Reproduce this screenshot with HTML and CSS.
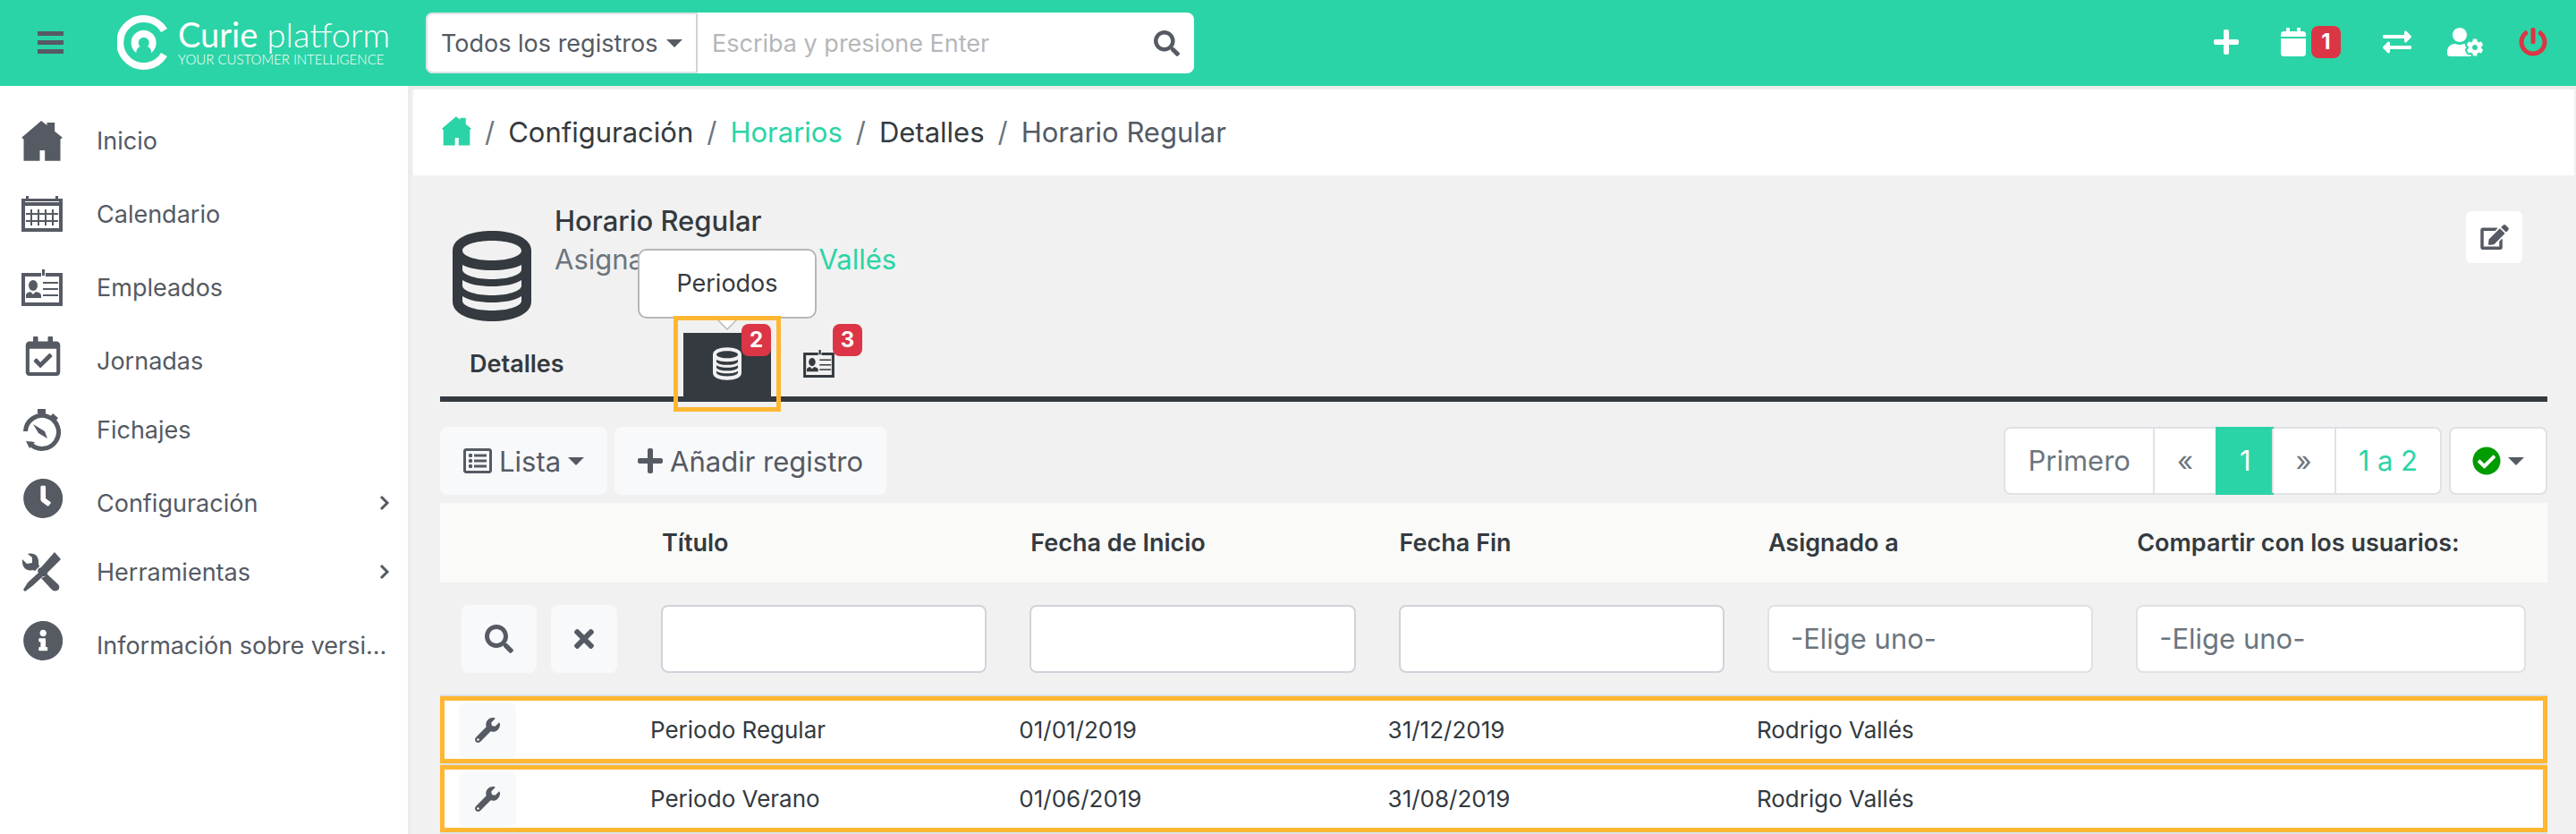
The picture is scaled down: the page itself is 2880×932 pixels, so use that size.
FILE: index.html
```html
<!DOCTYPE html>
<html lang="es">
<head>
	<title>Curie platform - Horario Regular</title>
	<meta charset="utf-8">
	<meta name="viewport" content="width=device-width, initial-scale=1">
	<link rel="stylesheet" href="styles.css">
</head>
<body>
	<!-- shared icons -->
	<svg class="sprite" aria-hidden="true">
		<symbol id="i-home" viewBox="73 411 137 135"><path d="M73 467L139 411L158 426V417H184V446L210 467L203 473V545H151V510H134V545H80V473Z"/></symbol>
		<symbol id="i-card" viewBox="0 0 46 41"><path fill-rule="evenodd" d="M0 4H22V8H4V37H42V8H27V4H46V41H0ZM23 0H26V7H23Z"/><path d="M24 14H41V16H24ZM24 21H41V23H24ZM24 28H41V30H24Z"/><ellipse cx="13" cy="18" rx="5" ry="6"/><path d="M5 32V29Q5 26 10 25L13 28L16 25Q22 26 22 29V32Z"/></symbol>
		<symbol id="i-db" viewBox="0 0 88 101"><path fill-rule="evenodd" d="M0 22C0 8 20 0 44 0S88 8 88 22V79C88 93 68 101 44 101S0 93 0 79ZM11 22C11 28 25 33 44 33S77 28 77 22S63 11 44 11S11 16 11 22ZM11 38V44C13 50 27 54 44 54S75 50 77 44V38C69 42 57 44 44 44S19 42 11 38ZM11 55V62C13 68 27 72 44 72S75 68 77 62V55C69 60 57 62 44 62S19 60 11 55ZM11 73V79C13 85 27 89 44 89S75 85 77 79V73C69 78 57 80 44 80S19 78 11 73Z"/></symbol>
		<symbol id="i-plus" viewBox="0 32 448 448"><path d="M416 208H272V64c0-17.67-14.33-32-32-32h-32c-17.67 0-32 14.33-32 32v144H32c-17.67 0-32 14.33-32 32v32c0 17.67 14.33 32 32 32h144v144c0 17.67 14.33 32 32 32h32c17.67 0 32-14.33 32-32V304h144c17.67 0 32-14.33 32-32v-32c0-17.67-14.33-32-32-32z"/></symbol>
		<symbol id="i-search" viewBox="0 0 512 512"><path d="M505 442.700L405.300 343c-4.500-4.500-10.600-7-17-7H372c27.600-35.300 44-79.700 44-128C416 93.100 322.900 0 208 0S0 93.100 0 208s93.100 208 208 208c48.300 0 92.700-16.400 128-44v16.300c0 6.400 2.500 12.500 7 17l99.700 99.700c9.400 9.400 24.600 9.400 33.900 0l28.300-28.300c9.400-9.400 9.400-24.600.1-34zM208 336c-70.700 0-128-57.200-128-128 0-70.700 57.200-128 128-128 70.700 0 128 57.200 128 128 0 70.700-57.200 128-128 128z"/></symbol>
		<symbol id="i-wrench" viewBox="0 0 512 512"><path d="M507.730 109.100c-2.240-9.030-13.540-12.090-20.120-5.510l-74.360 74.360-67.880-11.310-11.310-67.880 74.360-74.360c6.620-6.620 3.430-17.900-5.660-20.160-47.380-11.740-99.550.91-136.580 37.930-39.640 39.640-50.550 97.100-34.050 147.200L18.740 402.760c-24.990 24.990-24.990 65.510 0 90.500 24.990 24.990 65.510 24.990 90.500 0l213.210-213.210c50.120 16.710 107.470 5.680 147.370-34.220 37.070-37.070 49.700-89.320 37.910-136.730zM64 472c-13.250 0-24-10.750-24-24 0-13.260 10.750-24 24-24s24 10.740 24 24c0 13.250-10.750 24-24 24z"/></symbol>
	</svg>

	<header class="topbar">
		<button class="menu-toggle" type="button" aria-label="Menu"><svg width="29" height="26" viewBox="0 0 29 26"><path d="M0 0h29v5H0zM0 10h29v5H0zM0 20h29v5H0z"/></svg></button>
		<a class="logo" href="#">
			<svg width="58" height="62" viewBox="131 18 58 62"><path fill="none" stroke="#fff" stroke-width="8" d="M183.500 35A26.500 26.500 0 1 0 183.500 62"/><path d="M152.300 60A14 14 0 1 1 169 60C169 56 168 54 165 53A6 6 0 1 0 156.500 53C154 54 152.500 56 152.300 60Z"/></svg>
			<span class="logo-text">
				<span class="logo-name"><b>Curie</b> platform</span>
				<span class="logo-tag">YOUR CUSTOMER INTELLIGENCE</span>
			</span>
		</a>
		<form class="search">
			<span class="search-scope">
				<select aria-label="Módulo"><option>Todos los registros</option></select>
				<i class="caret"></i>
			</span>
			<input class="search-input" type="text" placeholder="Escriba y presione Enter" aria-label="Buscar">
			<button class="search-button" type="button" aria-label="Buscar"><svg width="29" height="29"><use href="#i-search"/></svg></button>
		</form>
		<nav class="actions">
			<a href="#" aria-label="Crear"><svg width="28" height="28"><use href="#i-plus"/></svg></a>
			<a href="#" aria-label="Agenda" class="agenda"><svg width="28" height="32" viewBox="0 0 448 512"><path d="M12 192h424c6.600 0 12 5.400 12 12v260c0 26.500-21.500 48-48 48H48c-26.500 0-48-21.500-48-48V204c0-6.600 5.400-12 12-12zm436-44v-36c0-26.500-21.500-48-48-48h-48V12c0-6.600-5.400-12-12-12h-40c-6.600 0-12 5.400-12 12v52H160V12c0-6.600-5.400-12-12-12h-40c-6.600 0-12 5.400-12 12v52H48C21.500 64 0 85.500 0 112v36c0 6.600 5.400 12 12 12h424c6.600 0 12-5.400 12-12z"/></svg><span class="badge">1</span></a>
			<a href="#" aria-label="Cambiar"><svg width="32" height="32" viewBox="0 0 512 512"><path d="M0 168v-16c0-13.255 10.745-24 24-24h360V80c0-21.367 25.899-32.042 40.971-16.971l80 80c9.372 9.373 9.372 24.569 0 33.941l-80 80C409.956 271.982 384 261.456 384 240v-48H24c-13.255 0-24-10.745-24-24zm488 152H128v-48c0-21.314-25.862-32.080-40.971-16.971l-80 80c-9.372 9.373-9.372 24.569 0 33.941l80 80C102.057 463.997 128 453.437 128 432v-48h360c13.255 0 24-10.745 24-24v-16c0-13.255-10.745-24-24-24z"/></svg></a>
			<a href="#" aria-label="Usuario"><svg width="40" height="32" viewBox="0 0 640 512"><path d="M610.500 373.300c2.600-14.100 2.600-28.500 0-42.600l25.800-14.900c3-1.700 4.300-5.200 3.300-8.500-6.700-21.600-18.200-41.200-33.200-57.400-2.300-2.500-6-3.100-9-1.400l-25.800 14.900c-10.900-9.300-23.400-16.500-36.900-21.300v-29.800c0-3.400-2.400-6.400-5.700-7.100-22.300-5-45-4.800-66.200 0-3.300.7-5.700 3.700-5.700 7.100v29.800c-13.500 4.800-26 12-36.900 21.300l-25.800-14.900c-2.900-1.700-6.700-1.100-9 1.400-15 16.200-26.500 35.800-33.200 57.400-1 3.300.4 6.800 3.300 8.500l25.800 14.900c-2.600 14.100-2.600 28.500 0 42.600l-25.800 14.900c-3 1.700-4.300 5.200-3.300 8.500 6.700 21.600 18.200 41.100 33.200 57.400 2.300 2.500 6 3.100 9 1.400l25.800-14.900c10.900 9.300 23.400 16.500 36.900 21.300v29.800c0 3.400 2.400 6.400 5.700 7.100 22.300 5 45 4.800 66.200 0 3.300-.7 5.700-3.700 5.700-7.100v-29.800c13.500-4.800 26-12 36.900-21.300l25.800 14.900c2.900 1.700 6.700 1.100 9-1.400 15-16.200 26.500-35.800 33.200-57.400 1-3.300-.4-6.800-3.300-8.500l-25.800-14.900zM496 400.500c-26.800 0-48.500-21.800-48.500-48.500s21.800-48.500 48.500-48.500 48.500 21.800 48.500 48.500-21.700 48.500-48.500 48.500zM224 256c70.700 0 128-57.300 128-128S294.700 0 224 0 96 57.300 96 128s57.300 128 128 128zm201.200 226.500c-2.300-1.200-4.600-2.600-6.800-3.900l-7.900 4.600c-6 3.400-12.800 5.300-19.600 5.300-10.900 0-21.400-4.600-28.900-12.600-18.300-19.800-32.300-43.900-40.200-69.600-5.500-17.700 1.900-36.400 17.900-45.700l7.900-4.600c-.1-2.600-.1-5.200 0-7.800l-7.900-4.600c-16-9.200-23.400-28-17.900-45.700.9-2.900 2.200-5.800 3.200-8.700-3.800-.3-7.500-1.200-11.400-1.200h-16.700c-22.200 10.200-46.900 16-72.900 16s-50.600-5.800-72.900-16h-16.700C60.200 288 0 348.200 0 422.400V464c0 26.500 21.500 48 48 48h352c10.100 0 19.500-3.200 27.200-8.500-1.200-3.800-2-7.700-2-11.800v-9.200z"/></svg></a>
			<a href="#" aria-label="Salir" class="logout"><svg width="32" height="32" viewBox="0 0 512 512"><path d="M400 54.100c63 45 104 118.600 104 201.900 0 136.800-110.800 247.700-247.500 248C120 504.300 8.200 393 8 256.400 7.900 173.100 48.900 99.300 111.800 54.200c11.700-8.300 28-4.800 35 7.700L162.600 90c5.900 10.500 3.100 23.800-6.600 31-41.500 30.800-68 79.600-68 134.900-.1 92.300 74.500 168.100 168 168.100 91.600 0 168.600-74.200 168-169.100-.3-51.800-24.700-101.800-68.100-134-9.700-7.200-12.400-20.500-6.500-30.900l15.800-28.100c7-12.400 23.200-16.100 34.800-7.800zM296 264V24c0-13.300-10.700-24-24-24h-32c-13.300 0-24 10.700-24 24v240c0 13.300 10.700 24 24 24h32c13.300 0 24-10.700 24-24z"/></svg></a>
		</nav>
	</header>

	<div class="layout">
		<nav class="sidebar">
			<ul>
				<li><a href="#"><svg width="46" height="45"><use href="#i-home"/></svg><span>Inicio</span></a></li>
				<li><a href="#"><svg width="46" height="40" viewBox="0 0 46 40"><path fill-rule="evenodd" d="M0 3H5V0H8V3H38V0H41V3H46V40H0ZM4 6V7H42V6ZM4 11V36H42V11Z"/><path d="M5 19H41V21H5ZM5 27H41V29H5ZM10 15H12V33H10ZM18 15H20V33H18ZM26 15H28V33H26ZM34 15H36V33H34Z"/></svg><span>Calendario</span></a></li>
				<li><a href="#"><svg width="46" height="41"><use href="#i-card"/></svg><span>Empleados</span></a></li>
				<li class="raised"><a href="#"><svg width="46" height="44" viewBox="-12 0 448 512"><path d="M400 64h-48V12c0-6.627-5.373-12-12-12h-40c-6.627 0-12 5.373-12 12v52H160V12c0-6.627-5.373-12-12-12h-40c-6.627 0-12 5.373-12 12v52H48C21.490 64 0 85.490 0 112v352c0 26.510 21.490 48 48 48h352c26.510 0 48-21.490 48-48V112c0-26.510-21.490-48-48-48zm-6 400H54a6 6 0 0 1-6-6V160h352v298a6 6 0 0 1-6 6zm-52.849-200.650L198.842 404.519c-4.705 4.667-12.303 4.637-16.971-.068l-75.091-75.699c-4.667-4.705-4.637-12.303.068-16.971l22.719-22.536c4.705-4.667 12.303-4.637 16.970.069l44.104 44.461 111.072-110.181c4.705-4.667 12.303-4.637 16.971.068l22.536 22.718c4.667 4.705 4.636 12.303-.069 16.970z"/></svg><span>Jornadas</span></a></li>
				<li class="compact"><a href="#"><svg width="46" height="47" viewBox="0 0 46 47"><g fill="none" stroke="#555a63" stroke-width="5"><path d="M4.500 25A18.500 18.500 0 1 1 9 38"/></g><path d="M18 0H27V5H18ZM35 5L41 10L38 14L32 9ZM13 17L26 25L29 33L19 27ZM5 36L15 37L9 44Z"/></svg><span>Fichajes</span></a></li>
				<li class="raised"><a href="#"><svg width="46" height="44" viewBox="-6 8 496 496"><path d="M256,8C119,8,8,119,8,256S119,504,256,504,504,393,504,256,393,8,256,8Zm92.490,313h0l-20,25a16,16,0,0,1-22.490,2.500h0l-67-49.720a40,40,0,0,1-15-31.230V112a16,16,0,0,1,16-16h32a16,16,0,0,1,16,16V256l58,42.500A16,16,0,0,1,348.490,321Z"/></svg><span>Configuración</span><svg class="chevron" width="12" height="18" viewBox="0 0 12 18"><path d="M2 2L9 9L2 16"/></svg></a></li>
				<li class="compact"><a href="#"><svg width="46" height="44" viewBox="0 0 46 44"><path d="M7 2C15 0 20 5 19 13L20 16L15 21L13 20C6 22 0 17 1 8L6 13L12 12L12 6ZM28 24L41 36C45 41 39 46 34 42L22 29L27 27Z"/><path d="M37 0L44 8L29 23C29 26 27 28 24 27L12 38L4 44L2 42L7 34L19 23C17 20 19 18 22 17Z"/></svg><span>Herramientas</span><svg class="chevron" width="12" height="18" viewBox="0 0 12 18"><path d="M2 2L9 9L2 16"/></svg></a></li>
				<li class="raised"><a href="#"><svg width="46" height="44" viewBox="-6 8 496 496"><path d="M256 8C119.043 8 8 119.083 8 256c0 136.997 111.043 248 248 248s248-111.003 248-248C504 119.083 392.957 8 256 8zm0 110c23.196 0 42 18.804 42 42s-18.804 42-42 42-42-18.804-42-42 18.804-42 42-42zm56 254c0 6.627-5.373 12-12 12h-88c-6.627 0-12-5.373-12-12v-24c0-6.627 5.373-12 12-12h12v-64h-12c-6.627 0-12-5.373-12-12v-24c0-6.627 5.373-12 12-12h64c6.627 0 12 5.373 12 12v100h12c6.627 0 12 5.373 12 12v24z"/></svg><span>Información sobre versi...</span></a></li>
			</ul>
		</nav>

		<main class="content">
			<nav class="breadcrumb">
				<a href="#" aria-label="Inicio" class="green"><svg width="33" height="33"><use href="#i-home"/></svg></a><i>/</i>
				<a href="#">Configuración</a><i>/</i>
				<a href="#" class="green">Horarios</a><i>/</i>
				<a href="#">Detalles</a><i>/</i>
				<span>Horario Regular</span>
			</nav>

			<section class="record">
				<div class="record-head">
					<svg class="record-icon" width="88" height="101"><use href="#i-db"/></svg>
					<div class="record-title">
						<h1>Horario Regular</h1>
						<p>Asignado a <a href="#">Rodrigo Vallés</a></p>
					</div>
					<button class="edit" type="button" aria-label="Editar"><svg width="32" height="28" viewBox="0 0 576 512"><path d="M402.600 83.200l90.200 90.200c3.800 3.800 3.800 10 0 13.800L274.400 405.600l-92.800 10.300c-12.400 1.400-22.900-9.100-21.500-21.500l10.300-92.800L388.800 83.200c3.800-3.800 10-3.800 13.800 0zm162-22.900l-48.800-48.800c-15.200-15.200-39.900-15.200-55.200 0l-35.400 35.400c-3.800 3.800-3.800 10 0 13.800l90.200 90.200c3.800 3.800 10 3.800 13.800 0l35.400-35.400c15.200-15.300 15.200-40 0-55.200zM384 346.200V448H64V128h229.800c3.200 0 6.200-1.300 8.500-3.500l40-40c7.600-7.600 2.200-20.500-8.500-20.500H48C21.500 64 0 85.500 0 112v352c0 26.500 21.500 48 48 48h352c26.500 0 48-21.500 48-48V306.200c0-10.700-12.900-16-20.500-8.500l-40 40c-2.200 2.300-3.500 5.300-3.500 8.500z"/></svg></button>
				</div>

				<div class="tabs">
					<a class="tab tab-main" href="#">Detalles</a>
					<a class="tab active" href="#" aria-label="Periodos">
						<svg width="32" height="37"><use href="#i-db"/></svg>
						<span class="tooltip">Periodos</span>
						<span class="highlight"></span>
						<span class="badge">2</span>
					</a>
					<a class="tab" href="#" aria-label="Empleados">
						<svg width="35" height="31"><use href="#i-card"/></svg>
						<span class="badge">3</span>
					</a>
				</div>

				<div class="toolbar">
					<button class="btn" type="button"><svg width="32" height="28" viewBox="0 32 512 448"><path d="M464 32H48C21.490 32 0 53.490 0 80v352c0 26.510 21.490 48 48 48h416c26.510 0 48-21.490 48-48V80c0-26.510-21.490-48-48-48zm-6 400H54a6 6 0 0 1-6-6V86a6 6 0 0 1 6-6h404a6 6 0 0 1 6 6v340a6 6 0 0 1-6 6z"/><path d="M192 136h224v48H192zM192 232h224v48H192zM192 328h224v48H192z"/><circle cx="128" cy="160" r="36"/><circle cx="128" cy="256" r="36"/><circle cx="128" cy="352" r="36"/></svg>Lista<i class="caret"></i></button>
					<button class="btn" type="button"><svg width="28" height="28"><use href="#i-plus"/></svg>Añadir registro</button>
					<div class="pagination">
						<a href="#">Primero</a>
						<a href="#">«</a>
						<a href="#" class="current">1</a>
						<a href="#">»</a>
						<a href="#" class="green">1 a 2</a>
					</div>
					<button class="btn status" type="button" aria-label="Estado"><svg width="32" height="32" viewBox="0 0 512 512"><path d="M504 256c0 136.967-111.033 248-248 248S8 392.967 8 256 119.033 8 256 8s248 111.033 248 248zM227.314 387.314l184-184c6.248-6.248 6.248-16.379 0-22.627l-22.627-22.627c-6.248-6.249-16.379-6.249-22.628 0L216 308.118l-70.059-70.059c-6.248-6.248-16.379-6.248-22.628 0l-22.627 22.627c-6.248 6.248-6.248 16.379 0 22.627l104 104c6.249 6.249 16.379 6.249 22.628.001z"/></svg><i class="caret"></i></button>
				</div>

				<table class="records">
					<colgroup><col class="col-tools"><col class="col-data"><col class="col-data"><col class="col-data"><col class="col-data"><col></colgroup>
					<thead>
						<tr>
							<th></th>
							<th>Título</th>
							<th>Fecha de Inicio</th>
							<th>Fecha Fin</th>
							<th>Asignado a</th>
							<th>Compartir con los usuarios:</th>
						</tr>
						<tr class="filters">
							<td><div class="filter-buttons">
								<button class="btn" type="button" aria-label="Buscar"><svg width="32" height="32"><use href="#i-search"/></svg></button>
								<button class="btn" type="button" aria-label="Limpiar"><svg width="22" height="32" viewBox="0 0 352 512"><path d="M242.720 256l100.070-100.070c12.280-12.280 12.280-32.190 0-44.480l-22.240-22.240c-12.280-12.280-32.190-12.280-44.480 0L176 189.280 75.930 89.210c-12.280-12.280-32.190-12.280-44.480 0L9.210 111.450c-12.280 12.280-12.280 32.190 0 44.480L109.280 256 9.210 356.070c-12.280 12.280-12.280 32.190 0 44.480l22.240 22.240c12.280 12.280 32.200 12.280 44.480 0L176 322.720l100.070 100.070c12.280 12.280 32.200 12.280 44.480 0l22.240-22.240c12.280-12.280 12.280-32.190 0-44.480L242.720 256z"/></svg></button>
							</div></td>
							<td><input type="text" aria-label="Título"></td>
							<td><input type="text" aria-label="Fecha de Inicio"></td>
							<td><input type="text" aria-label="Fecha Fin"></td>
							<td><select aria-label="Asignado a"><option>-Elige uno-</option></select></td>
							<td><select aria-label="Compartir con los usuarios"><option>-Elige uno-</option></select></td>
						</tr>
					</thead>
					<tbody>
						<tr>
							<td><button class="btn row-tool" type="button" aria-label="Acciones"><svg width="28" height="28"><use href="#i-wrench"/></svg></button></td>
							<td>Periodo Regular</td>
							<td>01/01/2019</td>
							<td>31/12/2019</td>
							<td>Rodrigo Vallés</td>
							<td></td>
						</tr>
						<tr>
							<td><button class="btn row-tool" type="button" aria-label="Acciones"><svg width="28" height="28"><use href="#i-wrench"/></svg></button></td>
							<td>Periodo Verano</td>
							<td>01/06/2019</td>
							<td>31/08/2019</td>
							<td>Rodrigo Vallés</td>
							<td></td>
						</tr>
					</tbody>
				</table>
			</section>
		</main>
	</div>
</body>
</html>
```
FILE: styles.css
```css
* {
	box-sizing: border-box;
}

body {
	margin: 0;
	min-height: 100vh;
	display: flex;
	flex-direction: column;
	background-color: #f1f1f1;
	color: #343a40;
	font-family: Inter, "Liberation Sans", sans-serif;
	font-size: 27px;
}

a {
	color: inherit;
	text-decoration: none;
}

svg {
	display: block;
	flex: none;
	fill: currentColor;
}

button, input, select {
	font: inherit;
	color: inherit;
	margin: 0;
	border: none;
	background: none;
}

select {
	appearance: none;
}

ul {
	list-style: none;
	margin: 0;
	padding: 0;
}

.sprite {
	position: absolute;
	width: 0;
	height: 0;
}

.green {
	color: #2bd4a6;
}

.caret {
	width: 0;
	height: 0;
	border: 9px solid transparent;
	border-top-color: currentColor;
	border-bottom: none;
}

.badge {
	width: 33px;
	height: 36px;
	border-radius: 8px;
	background-color: #dc3545;
	color: #ffffff;
	font-size: 24px;
	font-weight: bold;
	line-height: 36px;
	text-align: center;
}

/* top bar */

.topbar {
	display: flex;
	align-items: center;
	height: 96px;
	padding: 0 32px 0 42px;
	background-color: #2bd4a6;
}

.menu-toggle {
	padding: 0;
	color: #555a63;
}

.logo {
	display: flex;
	align-items: center;
	width: 345px;
	padding-left: 60px;
	color: #ffffff;
	font-family: Lato, sans-serif;
}

.logo-text {
	display: flex;
	flex-direction: column;
	padding-left: 10px;
	white-space: nowrap;
}

.logo-name {
	font-size: 38px;
	font-weight: 300;
	line-height: 36px;
}

.logo-tag {
	font-size: 15px;
	font-weight: 300;
	line-height: 20px;
}

.search {
	display: flex;
	align-items: center;
	width: 859px;
	height: 68px;
	margin: 0 0 0 60px;
	border-radius: 8px;
	background-color: #ffffff;
}

.search-scope {
	display: flex;
	align-items: center;
	width: 304px;
	height: 68px;
	padding: 0 15px;
	border: 2px solid #dee2e6;
	border-right-color: #ced4da;
	border-radius: 8px 0 0 8px;
	color: #555a63;
}

.search-scope select {
	flex: 1;
	min-width: 0;
	padding: 0;
}

.search-input {
	flex: 1;
	min-width: 0;
	height: 68px;
	padding: 0 16px;
	outline: none;
}

.search-input::placeholder {
	color: #b5b7ba;
	opacity: 1;
}

.search-button {
	padding: 0 16px;
	color: #555a63;
}

.actions {
	display: flex;
	align-items: center;
	gap: 40px;
	margin-left: auto;
	padding-bottom: 3px;
	color: #ffffff;
}

.actions a:nth-child(-n+2) {
	margin-right: 7px;
}

.agenda {
	display: flex;
	align-items: center;
	gap: 6px;
}

.logout {
	color: #dc3545;
}

/* sidebar */

.layout {
	flex: 1;
	display: flex;
}

.sidebar {
	width: 460px;
	flex: none;
	padding-top: 4px;
	border-right: 4px solid #ececec;
	background-color: #ffffff;
	color: #555a63;
}

.sidebar li {
	padding-top: 32px;
}

.sidebar .compact {
	padding-top: 27px;
}

.sidebar li a {
	display: flex;
	align-items: center;
	gap: 38px;
	height: 50px;
	padding: 0 20px 0 24px;
	white-space: nowrap;
}

.raised svg:first-child {
	margin-bottom: 10px;
}

.chevron {
	margin-left: auto;
	fill: none;
	stroke: #555a63;
	stroke-width: 3;
}

/* content */

.content {
	flex: 1;
	min-width: 0;
	border-top: 4px solid #ececec;
}

.breadcrumb {
	display: flex;
	align-items: center;
	gap: 15px;
	height: 96px;
	margin: 0 2px;
	padding: 0 32px;
	background-color: #ffffff;
	font-size: 31px;
	line-height: 96px;
}

.breadcrumb svg {
	margin-bottom: 4px;
}

.breadcrumb i {
	color: #6c757d;
	font-style: normal;
}

.breadcrumb span {
	color: #555a63;
}

.record {
	padding: 0 32px;
}

.record-head {
	display: flex;
	align-items: flex-start;
	height: 176px;
	padding: 29px 28px 0 14px;
}

.record-icon {
	margin-top: 33px;
}

.record-title {
	flex: 1;
	padding-left: 26px;
	font-size: 31px;
	line-height: 43px;
}

.record-title h1 {
	margin: 0;
	font-size: 31px;
	font-weight: 500;
}

.record-title p {
	margin: 0;
	color: #6c757d;
}

.record-title a {
	color: #2bd4a6;
}

.edit {
	display: flex;
	align-items: center;
	justify-content: center;
	width: 63px;
	height: 58px;
	margin-top: 11px;
	padding: 0;
	border-radius: 6px;
	background-color: #ffffff;
	color: #555a63;
}

.tabs {
	display: flex;
	height: 77px;
	border-bottom: 6px solid #343a40;
}

.tab {
	position: relative;
	display: flex;
	align-items: center;
	justify-content: center;
	width: 98px;
	height: 77px;
	margin-right: 4px;
	padding-bottom: 8px;
}

.tab-main {
	justify-content: flex-start;
	width: 268px;
	padding-left: 33px;
	font-weight: 600;
}

.tab.active {
	background-color: #343a40;
	color: #f1f1f1;
}

.tab .badge {
	position: absolute;
	top: -10px;
	right: 0;
}

.highlight {
	position: absolute;
	inset: -19px -11px -11px;
	border: 5px solid #ffb733;
}

.tooltip {
	position: absolute;
	left: 50%;
	bottom: 93px;
	width: 200px;
	height: 78px;
	margin-left: -100px;
	border: 2px solid #b5b7ba;
	border-radius: 10px;
	background-color: #ffffff;
	color: #343a40;
	line-height: 74px;
	text-align: center;
}

.tooltip::before, .tooltip::after {
	content: "";
	position: absolute;
	left: 50%;
	top: 100%;
	margin-left: -15px;
	border: 15px solid transparent;
	border-top-color: #b5b7ba;
	border-bottom: none;
}

.tooltip::after {
	margin-left: -13px;
	border-width: 13px;
	border-top-color: #ffffff;
}

.toolbar {
	display: flex;
	gap: 8px;
	padding: 28px 0 9px;
	font-size: 31px;
}

.btn {
	display: flex;
	align-items: center;
	justify-content: center;
	gap: 8px;
	height: 76px;
	padding: 0 26px;
	border-radius: 8px;
	background-color: #f8f9fb;
	color: #555a63;
}

.pagination {
	display: flex;
	margin-left: auto;
	border: 2px solid #dee2e6;
	border-radius: 8px;
	background-color: #ffffff;
	color: #6c757d;
	line-height: 72px;
}

.pagination a {
	padding: 0 25px;
	border-left: 2px solid #dee2e6;
}

.pagination a:first-child {
	border-left: none;
}

.pagination .green {
	color: #2bd4a6;
}

.pagination .current {
	margin: -2px -2px -2px 0;
	border-color: #2bd4a6;
	background-color: #2bd4a6;
	color: #ffffff;
	line-height: 76px;
}

.status {
	padding: 0 24px;
	border: 2px solid #dee2e6;
	background-color: #ffffff;
}

.status svg {
	fill: #009c00;
}

/* records table */

.records {
	width: 100%;
	table-layout: fixed;
	border-spacing: 0;
	border-bottom: 2px solid #dee2e6;
}

.col-tools {
	width: 223px;
}

.col-data {
	width: 17.5%;
}

.records th {
	height: 89px;
	padding: 0 25px;
	background-color: #fafaf8;
	font-weight: 600;
	text-align: left;
	white-space: nowrap;
}

.filters td {
	height: 125px;
	padding: 0 24px;
}

.filters input, .filters select {
	display: block;
	width: 100%;
	height: 76px;
	padding: 0 24px;
	border: 2px solid #ced4da;
	border-radius: 8px;
	background-color: #ffffff;
	font-size: 31px;
}

.filters select {
	border-color: #dee2e6;
	color: #6c757d;
}

.filter-buttons {
	display: flex;
	gap: 16px;
}

.records tbody td {
	height: 77px;
	padding: 0 12px;
	border-top: 2px solid #dee2e6;
	background-color: #ffffff;
	box-shadow: inset 0 5px #ffb733, inset 0 -5px #ffb733;
	font-size: 26px;
}

.records tbody td:first-child {
	padding-left: 21px;
	box-shadow: inset 5px 0 #ffb733, inset 0 5px #ffb733, inset 0 -5px #ffb733;
}

.records tbody td:last-child {
	box-shadow: inset -5px 0 #ffb733, inset 0 5px #ffb733, inset 0 -5px #ffb733;
}

.row-tool {
	height: 62px;
	padding: 0 18px;
}
```
